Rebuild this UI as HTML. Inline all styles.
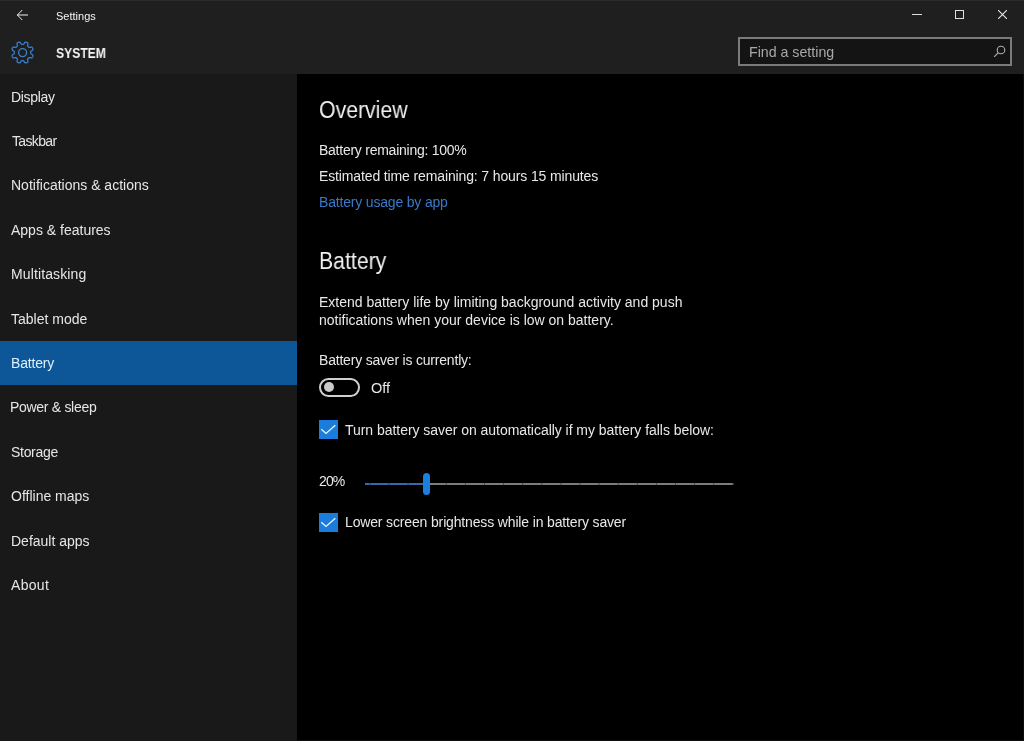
<!DOCTYPE html>
<html><head><meta charset="utf-8">
<style>
*{margin:0;padding:0;box-sizing:border-box}
html,body{width:1024px;height:741px;overflow:hidden;background:#000}
body{font-family:"Liberation Sans",sans-serif;color:#fff;position:relative;-webkit-font-smoothing:antialiased}
.abs,.nav,.txt,.h{will-change:transform}
.abs{position:absolute;white-space:nowrap}
#hdr{position:absolute;left:0;top:0;width:1024px;height:74px;background:#1f1f1f}
#side{position:absolute;left:0;top:74px;width:297px;height:667px;background:#191919}
#sel{position:absolute;left:0;top:341px;width:297px;height:44px;background:#0d5697}
.nav{position:absolute;left:10.5px;font-size:14px;color:#e6e6e6;line-height:16px}
.txt{position:absolute;left:319px;font-size:14px;color:#e8e8e8;line-height:16px;white-space:nowrap}
.h{position:absolute;left:319px;font-size:23px;color:#f0f0f0;line-height:26px;white-space:nowrap;transform-origin:0 0}
</style></head><body>
<div id="hdr"></div>
<div id="side"></div>
<div id="sel"></div>
<div class="abs" style="left:0;top:0;width:1024px;height:1px;background:#2b2b2b"></div>
<div class="abs" style="left:297px;top:740px;width:727px;height:1px;background:#111"></div>
<div class="abs" style="left:1023px;top:74px;width:1px;height:667px;background:#0c0c0c"></div>

<!-- title bar -->
<svg class="abs" style="left:16px;top:9px" width="14" height="12" viewBox="0 0 14 12"><path d="M1.3 6H12M6.3 1L1.3 6l5 5" fill="none" stroke="#f0f0f0" stroke-width="1"/></svg>
<div class="abs" style="left:56px;top:8.5px;font-size:11px;color:#f4f4f4;line-height:14px">Settings</div>
<div class="abs" style="left:912.2px;top:14.2px;width:9.8px;height:1px;background:#e0e0e0"></div>
<div class="abs" style="left:954.9px;top:10px;width:9.4px;height:9.4px;border:1px solid #e0e0e0;border-bottom-width:1.4px"></div>
<svg class="abs" style="left:997.9px;top:10px" width="9" height="9" viewBox="0 0 9 9"><path d="M0 0L9 9M9 0L0 9" stroke="#e8e8e8" stroke-width="1.1"/></svg>

<!-- gear -->
<svg class="abs" style="left:10px;top:39.6px" width="25" height="25" viewBox="0 0 25 25"><path d="M20.70,12.50 20.70,12.71 20.70,12.93 20.72,13.15 20.76,13.37 20.88,13.60 21.14,13.87 21.62,14.19 22.21,14.56 22.66,14.94 22.88,15.28 22.94,15.59 22.92,15.89 22.85,16.17 22.77,16.44 22.66,16.71 22.55,16.97 22.41,17.23 22.26,17.47 22.07,17.70 21.81,17.87 21.41,17.96 20.82,17.91 20.14,17.75 19.58,17.64 19.20,17.64 18.96,17.73 18.77,17.85 18.61,18.00 18.45,18.15 18.30,18.30 18.15,18.45 18.00,18.61 17.85,18.77 17.73,18.96 17.64,19.20 17.64,19.58 17.75,20.14 17.91,20.82 17.96,21.41 17.87,21.81 17.70,22.07 17.47,22.26 17.23,22.41 16.97,22.55 16.71,22.66 16.44,22.77 16.17,22.85 15.89,22.92 15.59,22.94 15.28,22.88 14.94,22.66 14.56,22.21 14.19,21.62 13.87,21.14 13.60,20.88 13.37,20.76 13.15,20.72 12.93,20.70 12.71,20.70 12.50,20.70 12.29,20.70 12.07,20.70 11.85,20.72 11.63,20.76 11.40,20.88 11.13,21.14 10.81,21.62 10.44,22.21 10.06,22.66 9.72,22.88 9.41,22.94 9.11,22.92 8.83,22.85 8.56,22.77 8.29,22.66 8.03,22.55 7.77,22.41 7.53,22.26 7.30,22.07 7.13,21.81 7.04,21.41 7.09,20.82 7.25,20.14 7.36,19.58 7.36,19.20 7.27,18.96 7.15,18.77 7.00,18.61 6.85,18.45 6.70,18.30 6.55,18.15 6.39,18.00 6.23,17.85 6.04,17.73 5.80,17.64 5.42,17.64 4.86,17.75 4.18,17.91 3.59,17.96 3.19,17.87 2.93,17.70 2.74,17.47 2.59,17.23 2.45,16.97 2.34,16.71 2.23,16.44 2.15,16.17 2.08,15.89 2.06,15.59 2.12,15.28 2.34,14.94 2.79,14.56 3.38,14.19 3.86,13.87 4.12,13.60 4.24,13.37 4.28,13.15 4.30,12.93 4.30,12.71 4.30,12.50 4.30,12.29 4.30,12.07 4.28,11.85 4.24,11.63 4.12,11.40 3.86,11.13 3.38,10.81 2.79,10.44 2.34,10.06 2.12,9.72 2.06,9.41 2.08,9.11 2.15,8.83 2.23,8.56 2.34,8.29 2.45,8.03 2.59,7.77 2.74,7.53 2.93,7.30 3.19,7.13 3.59,7.04 4.18,7.09 4.86,7.25 5.42,7.36 5.80,7.36 6.04,7.27 6.23,7.15 6.39,7.00 6.55,6.85 6.70,6.70 6.85,6.55 7.00,6.39 7.15,6.23 7.27,6.04 7.36,5.80 7.36,5.42 7.25,4.86 7.09,4.18 7.04,3.59 7.13,3.19 7.30,2.93 7.53,2.74 7.77,2.59 8.03,2.45 8.29,2.34 8.56,2.23 8.83,2.15 9.11,2.08 9.41,2.06 9.72,2.12 10.06,2.34 10.44,2.79 10.81,3.38 11.13,3.86 11.40,4.12 11.63,4.24 11.85,4.28 12.07,4.30 12.29,4.30 12.50,4.30 12.71,4.30 12.93,4.30 13.15,4.28 13.37,4.24 13.60,4.12 13.87,3.86 14.19,3.38 14.56,2.79 14.94,2.34 15.28,2.12 15.59,2.06 15.89,2.08 16.17,2.15 16.44,2.23 16.71,2.34 16.97,2.45 17.23,2.59 17.47,2.74 17.70,2.93 17.87,3.19 17.96,3.59 17.91,4.18 17.75,4.86 17.64,5.42 17.64,5.80 17.73,6.04 17.85,6.23 18.00,6.39 18.15,6.55 18.30,6.70 18.45,6.85 18.61,7.00 18.77,7.15 18.96,7.27 19.20,7.36 19.58,7.36 20.14,7.25 20.82,7.09 21.41,7.04 21.81,7.13 22.07,7.30 22.26,7.53 22.41,7.77 22.55,8.03 22.66,8.29 22.77,8.56 22.85,8.83 22.92,9.11 22.94,9.41 22.88,9.72 22.66,10.06 22.21,10.44 21.62,10.81 21.14,11.13 20.88,11.40 20.76,11.63 20.72,11.85 20.70,12.07 20.70,12.29Z" fill="none" stroke="#3a7fcc" stroke-width="1.3" stroke-linejoin="round"/><circle cx="12.6" cy="12.6" r="4" fill="none" stroke="#3a7fcc" stroke-width="1.3"/></svg>
<div class="abs" style="left:55.5px;top:45.5px;font-size:14.2px;font-weight:bold;color:#f2f2f2;line-height:14px;transform:scaleX(0.855);transform-origin:0 0">SYSTEM</div>

<!-- search -->
<div class="abs" style="left:738px;top:36.8px;width:274px;height:29.2px;border:2px solid #7b7b7b;background:#141414"></div>
<div class="abs" style="left:749px;top:44px;font-size:14.2px;color:#a8a8a8;line-height:16px">Find a setting</div>
<svg class="abs" style="left:992px;top:44px" width="14" height="14" viewBox="0 0 14 14"><circle cx="9" cy="6" r="3.8" fill="none" stroke="#b0b0b0" stroke-width="1.1"/><path d="M6.3 8.7L2.2 12.9" stroke="#b0b0b0" stroke-width="1.1"/></svg>

<!-- nav -->
<div class="nav" style="top:89px;letter-spacing:-0.3px">Display</div>
<div class="nav" style="top:133px;letter-spacing:-0.65px;left:11.5px">Taskbar</div>
<div class="nav" style="top:177px">Notifications &amp; actions</div>
<div class="nav" style="top:222px">Apps &amp; features</div>
<div class="nav" style="top:266px;letter-spacing:0.12px">Multitasking</div>
<div class="nav" style="top:311px">Tablet mode</div>
<div class="nav" style="top:355px;letter-spacing:-0.18px;color:#dcefff">Battery</div>
<div class="nav" style="top:399px;letter-spacing:-0.3px;left:10px">Power &amp; sleep</div>
<div class="nav" style="top:444px;letter-spacing:-0.3px">Storage</div>
<div class="nav" style="top:488px">Offline maps</div>
<div class="nav" style="top:533px">Default apps</div>
<div class="nav" style="top:577px;letter-spacing:0.3px;left:11px">About</div>

<!-- content -->
<div class="h" id="ov" style="top:96.5px;transform:scaleX(0.924)">Overview</div>
<div class="txt" id="rem" style="top:141.5px;letter-spacing:-0.25px">Battery remaining: 100%</div>
<div class="txt" id="est" style="top:167.5px;letter-spacing:-0.13px">Estimated time remaining: 7 hours 15 minutes</div>
<div class="txt" id="link" style="top:193.5px;color:#3a78c8;letter-spacing:-0.18px">Battery usage by app</div>

<div class="h" id="bh" style="top:247.7px;transform:scaleX(0.924)">Battery</div>
<div class="txt" id="ext1" style="top:293.5px">Extend battery life by limiting background activity and push</div>
<div class="txt" id="ext2" style="top:311.5px">notifications when your device is low on battery.</div>
<div class="txt" id="sav" style="top:351.5px;letter-spacing:-0.2px">Battery saver is currently:</div>

<!-- toggle -->
<div class="abs" style="left:319px;top:377.5px;width:41px;height:18.8px;border:2px solid #d0d0d0;border-radius:9.4px"></div>
<div class="abs" style="left:323.5px;top:382.2px;width:9.6px;height:9.6px;border-radius:5px;background:#cacaca"></div>
<div class="txt" id="off" style="left:371px;top:380px;font-size:14.5px">Off</div>

<!-- checkbox 1 -->
<div class="abs" style="left:319px;top:420px;width:19px;height:19px;background:#1c7cdc"></div>
<svg class="abs" style="left:319px;top:420px" width="19" height="19" viewBox="0 0 19 19"><path d="M2.3 9.3L7 13.5L16.3 5.3" fill="none" stroke="#e6faff" stroke-width="1.3"/></svg>
<div class="txt" id="turn" style="left:345px;top:421.5px;letter-spacing:-0.04px">Turn battery saver on automatically if my battery falls below:</div>

<!-- slider -->
<div class="txt" id="pct" style="top:473px;letter-spacing:-0.9px">20%</div>
<svg class="abs" style="left:365px;top:483px" width="370" height="2" viewBox="0 0 370 2"><rect x="0" y="0" width="60" height="2" fill="#3868aa"/><rect x="60" y="0" width="308.5" height="2" fill="#7c7c7c"/><rect x="4.4" y="0" width="1" height="2" fill="#000" fill-opacity="0.4"/><rect x="23.5" y="0" width="1" height="2" fill="#000" fill-opacity="0.4"/><rect x="42.6" y="0" width="1" height="2" fill="#000" fill-opacity="0.4"/><rect x="61.7" y="0" width="1" height="2" fill="#000" fill-opacity="0.4"/><rect x="80.8" y="0" width="1" height="2" fill="#000" fill-opacity="0.4"/><rect x="99.9" y="0" width="1" height="2" fill="#000" fill-opacity="0.4"/><rect x="119.0" y="0" width="1" height="2" fill="#000" fill-opacity="0.4"/><rect x="138.1" y="0" width="1" height="2" fill="#000" fill-opacity="0.4"/><rect x="157.2" y="0" width="1" height="2" fill="#000" fill-opacity="0.4"/><rect x="176.3" y="0" width="1" height="2" fill="#000" fill-opacity="0.4"/><rect x="195.4" y="0" width="1" height="2" fill="#000" fill-opacity="0.4"/><rect x="214.5" y="0" width="1" height="2" fill="#000" fill-opacity="0.4"/><rect x="233.6" y="0" width="1" height="2" fill="#000" fill-opacity="0.4"/><rect x="252.7" y="0" width="1" height="2" fill="#000" fill-opacity="0.4"/><rect x="271.8" y="0" width="1" height="2" fill="#000" fill-opacity="0.4"/><rect x="290.9" y="0" width="1" height="2" fill="#000" fill-opacity="0.4"/><rect x="310.0" y="0" width="1" height="2" fill="#000" fill-opacity="0.4"/><rect x="329.1" y="0" width="1" height="2" fill="#000" fill-opacity="0.4"/><rect x="348.2" y="0" width="1" height="2" fill="#000" fill-opacity="0.4"/><rect x="367.3" y="0" width="1" height="2" fill="#000" fill-opacity="0.4"/></svg>
<div class="abs" style="left:422.8px;top:473px;width:7.4px;height:21.5px;border-radius:3.7px;background:#1a80e0"></div>

<!-- checkbox 2 -->
<div class="abs" style="left:319px;top:512.5px;width:19px;height:19px;background:#1c7cdc"></div>
<svg class="abs" style="left:319px;top:512.5px" width="19" height="19" viewBox="0 0 19 19"><path d="M2.3 9.3L7 13.5L16.3 5.3" fill="none" stroke="#e6faff" stroke-width="1.3"/></svg>
<div class="txt" id="low" style="left:345px;top:513.5px;letter-spacing:-0.15px">Lower screen brightness while in battery saver</div>
</body></html>
